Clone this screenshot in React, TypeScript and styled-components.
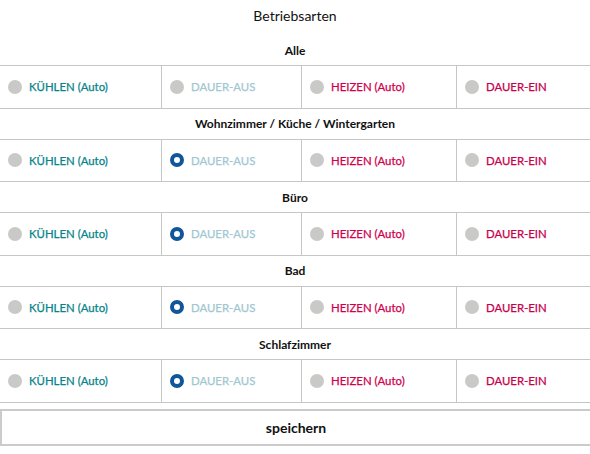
import React from "react";
import styled, { createGlobalStyle } from "styled-components";

const GlobalStyle = createGlobalStyle`
  html, body {
    margin: 0;
    padding: 0;
    background: #fff;
    overflow: hidden;
  }
  body {
    font-family: Lato, "Open Sans", "Liberation Sans", sans-serif;
    color: #111;
  }
`;

type Mode = "cool" | "off" | "heat" | "on";

const MODES: { key: Mode; label: string; color: string }[] = [
  { key: "cool", label: "KÜHLEN (Auto)", color: "#06838b" },
  { key: "off", label: "DAUER-AUS", color: "#9fc7d1" },
  { key: "heat", label: "HEIZEN (Auto)", color: "#d0004d" },
  { key: "on", label: "DAUER-EIN", color: "#c6004b" },
];

const ROOMS: { name: string; mode?: Mode }[] = [
  { name: "Alle" },
  { name: "Wohnzimmer / Küche / Wintergarten", mode: "off" },
  { name: "Büro", mode: "off" },
  { name: "Bad", mode: "off" },
  { name: "Schlafzimmer", mode: "off" },
];

const Page = styled.div`
  width: 590px;
`;

const Title = styled.h1`
  margin: 0;
  height: 35px;
  display: flex;
  align-items: center;
  justify-content: center;
  padding-bottom: 4px;
  box-sizing: border-box;
  font-size: 14px;
  font-weight: 400;
`;

const RoomHeader = styled.h2`
  margin: 0;
  height: 30px;
  display: flex;
  align-items: center;
  justify-content: center;
  font-size: 12px;
  font-weight: 700;
`;

const ModeRow = styled.div`
  display: grid;
  grid-template-columns: 161px 140px 155px 1fr;
  height: 43.5px;
  box-sizing: border-box;
  border-top: 1px solid #c6c6c6;
  border-bottom: 1px solid #c6c6c6;
`;

const ModeCell = styled.label`
  display: flex;
  align-items: center;
  gap: 7px;
  padding-left: 8px;
  border-left: 1px solid #c6c6c6;
  &:first-child {
    border-left: none;
  }
`;

const Radio = styled.span<{ $checked: boolean }>`
  width: 14px;
  height: 14px;
  border-radius: 50%;
  box-sizing: border-box;
  flex: none;
  background: ${(p) => (p.$checked ? "#fff" : "#c9c9c7")};
  border: ${(p) => (p.$checked ? "4px solid #11569a" : "none")};
`;

const ModeLabel = styled.span<{ $color: string }>`
  font-size: 11.4px;
  color: ${(p) => p.$color};
  -webkit-text-stroke: 0.25px ${(p) => p.$color};
`;

const SaveButton = styled.button`
  display: block;
  width: 100%;
  height: 37px;
  margin-top: 6px;
  background: #fff;
  border: 2px solid #cbcbcb;
  border-right: none;
  font-family: inherit;
  font-size: 14px;
  font-weight: 700;
  color: #111;
`;

export default function App() {
  return (
    <Page>
      <GlobalStyle />
      <Title>Betriebsarten</Title>
      {ROOMS.map((room) => (
        <section key={room.name}>
          <RoomHeader>{room.name}</RoomHeader>
          <ModeRow>
            {MODES.map((m) => (
              <ModeCell key={m.key}>
                <Radio $checked={room.mode === m.key} />
                <ModeLabel $color={m.color}>{m.label}</ModeLabel>
              </ModeCell>
            ))}
          </ModeRow>
        </section>
      ))}
      <SaveButton>speichern</SaveButton>
    </Page>
  );
}
